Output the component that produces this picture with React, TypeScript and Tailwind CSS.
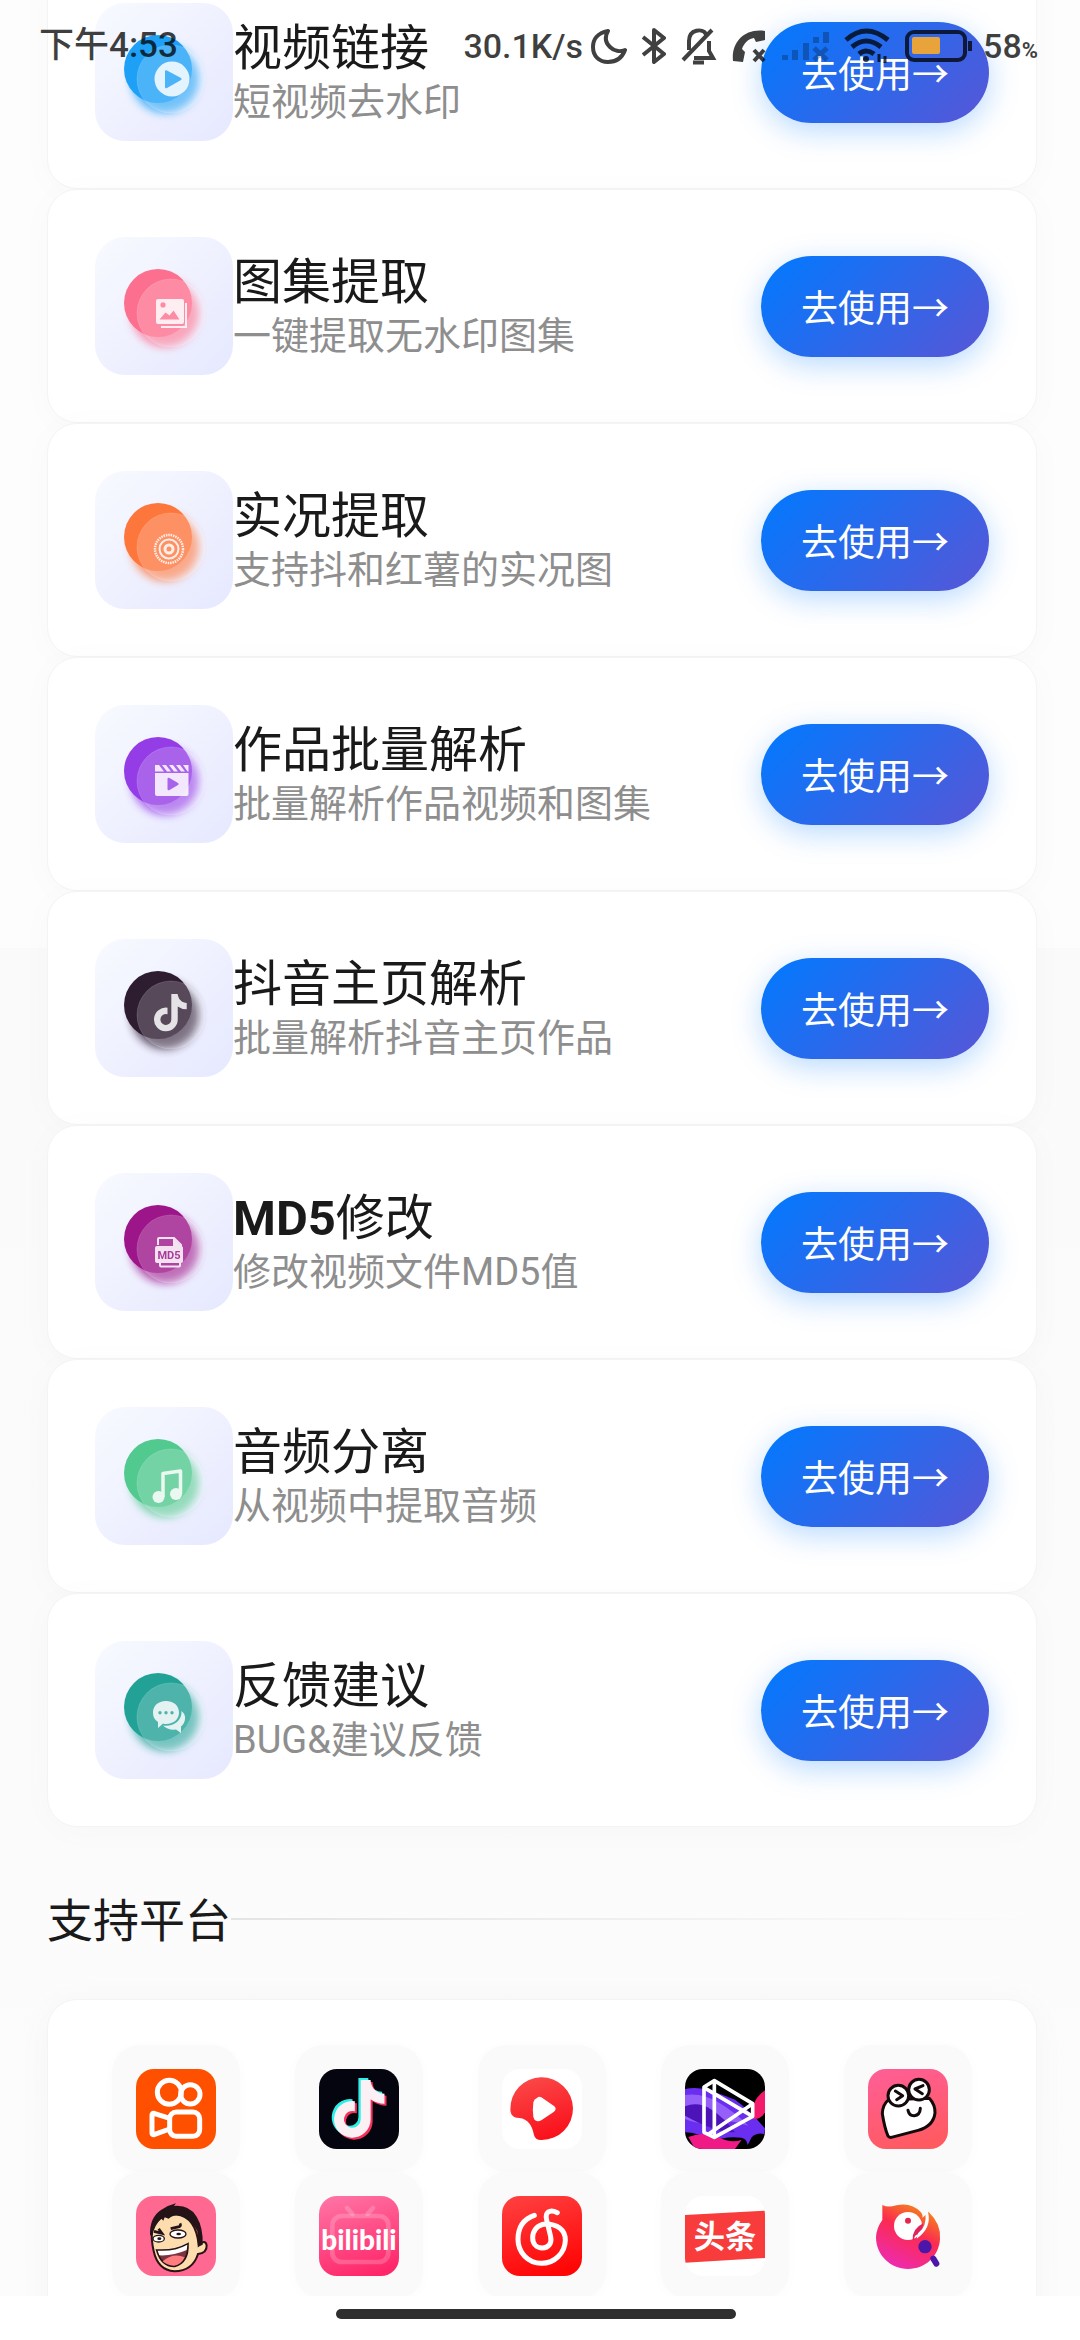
import React from "react"

interface Tool {
  title: string
  desc: string
  color: string
  glyph: React.ReactNode
}

const TIKTOK_PATH =
  "M448,209.91a210.06,210.06,0,0,1-122.77-39.25V349.38A162.55,162.55,0,1,1,185,188.31V278.2a74.62,74.62,0,1,0,52.23,71.18V0l88,0a121.18,121.18,0,0,0,1.86,22.17h0A122.18,122.18,0,0,0,381,102.39a121.43,121.43,0,0,0,67,20.14Z"

// 功能列表
const tools: Tool[] = [
  {
    title: "视频链接",
    desc: "短视频去水印",
    color: "#1ea0f6",
    glyph: (
      <path
        fillRule="evenodd"
        d="M77 58.5a17.5 17.5 0 1 0 0 35a17.5 17.5 0 0 0 0-35ZM70 68.5q0-2 2-1l14 7.500q1.500 1 0 2l-14 8q-2 1-2-1Z"
      />
    )
  },
  {
    title: "图集提取",
    desc: "一键提取无水印图集",
    color: "#fd6f8e",
    glyph: (
      <>
        <path
          fillRule="evenodd"
          d="M63 62h24q2 0 2 2v21q0 2-2 2H63q-2 0-2-2V64q0-2 2-2ZM68 65.300a2.600 2.600 0 1 0 0 5.200a2.600 2.600 0 0 0 0-5.200ZM64.500 82.500h20l-6-9-4 5-4-3Z"
        />
        <path d="M91 66v24H66" fill="none" stroke="#fff" strokeWidth="2" />
      </>
    )
  },
  {
    title: "实况提取",
    desc: "支持抖和红薯的实况图",
    color: "#fd763c",
    glyph: (
      <g fill="none" stroke="#fff">
        <circle cx="74" cy="78" r="4" strokeWidth="3" />
        <circle cx="74" cy="78" r="9.500" strokeWidth="2" />
        <circle cx="74" cy="78" r="14" strokeWidth="2.500" strokeDasharray="1.500 0.900" />
      </g>
    )
  },
  {
    title: "作品批量解析",
    desc: "批量解析作品视频和图集",
    color: "#943de6",
    glyph: (
      <>
        <path d="M60 60h4l5 6.500h-9ZM67 60h4l5 6.500h-4ZM74 60h4l5 6.500h-4ZM81 60h4l5 6.500h-4ZM88 60h5.500v6.500h-1Z" />
        <path
          fillRule="evenodd"
          d="M60 68h33.500v21q0 2-2 2H62q-2 0-2-2ZM72.500 74v10q0 2 2 1l8.500-5q1.500-1 0-2l-8.500-5q-2-1-2 1Z"
        />
      </>
    )
  },
  {
    title: "抖音主页解析",
    desc: "批量解析抖音主页作品",
    color: "#2e1c30",
    glyph: <path d={TIKTOK_PATH} transform="translate(59 55) scale(0.073)" />
  },
  {
    title: "MD5修改",
    desc: "修改视频文件MD5值",
    color: "#9c168a",
    glyph: (
      <>
        <path d="M63 72v-6q0-1 1-1h15l7 7v2M65 90v2.500q0 1 1 1h18q1 0 1-1V90" fill="none" stroke="#fff" strokeWidth="2" />
        <path d="M78 65l8 8h-8Z" />
        <rect x="60" y="73" width="28" height="17" rx="2" />
        <text
          x="74"
          y="85.500"
          textAnchor="middle"
          fill="#a83a9b"
          className="font-['Roboto',sans-serif] text-[11px] font-bold"
        >
          MD5
        </text>
      </>
    )
  },
  {
    title: "音频分离",
    desc: "从视频中提取音频",
    color: "#52c98e",
    glyph: (
      <>
        <path d="M68 90V66.500L85.500 64v23" fill="none" stroke="#fff" strokeWidth="3.500" strokeLinejoin="round" />
        <circle cx="63.500" cy="90" r="6" />
        <circle cx="81" cy="87" r="6" />
      </>
    )
  },
  {
    title: "反馈建议",
    desc: "BUG&建议反馈",
    color: "#22a296",
    glyph: (
      <>
        <path
          fillRule="evenodd"
          d="M71 60c8 0 13 5 13 11.500S79 83 71 83q-2 0-3-.5L63 87v-6q-5-3-5-9.500C58 65 63 60 71 60ZM65 70a1.700 1.700 0 1 0 0 3.400a1.700 1.700 0 0 0 0-3.400ZM71 70a1.700 1.700 0 1 0 0 3.400a1.700 1.700 0 0 0 0-3.400ZM77 70a1.700 1.700 0 1 0 0 3.400a1.700 1.700 0 0 0 0-3.400Z"
        />
        <path d="M86.500 70q4 3 3.500 8t-4 7.500V92l-5-3.500q-8 1-13-4 9 1 14-3.500t4.500-11Z" />
      </>
    )
  }
]

const ToolIcon: React.FC<{ id: string; color: string; children: React.ReactNode }> = ({ id, color, children }) => (
  <div className="size-[138px] shrink-0 rounded-[30px] bg-linear-135/srgb from-[#f8faff] to-[#e6e8ff]">
    <svg viewBox="0 0 138 138" className="size-full" aria-hidden="true">
      <defs>
        <filter id={id} x="-30%" y="-30%" width="160%" height="160%">
          <feGaussianBlur stdDeviation="4" />
        </filter>
      </defs>
      <circle cx="70" cy="76" r="34" fill={color} opacity="0.75" filter={`url(#${id})`} />
      <circle cx="63" cy="66" r="34" fill={color} />
      <circle cx="76" cy="76" r="34" fill="#fff" fillOpacity="0.2" stroke="#fff" strokeOpacity="0.15" />
      <g fill="#fff" opacity="0.85">
        {children}
      </g>
    </svg>
  </div>
)

// 标题中的英文和数字加粗
const Title: React.FC<{ text: string }> = ({ text }) => (
  <h2 className="text-[49px] leading-[56px] text-[#1a1a1a]">
    {text.split(/([A-Za-z0-9]+)/).map((part, i) =>
      i % 2 ? (
        <b key={i} className="font-bold">
          {part}
        </b>
      ) : (
        part
      )
    )}
  </h2>
)

const ToolCard: React.FC<{ tool: Tool; index: number }> = ({ tool, index }) => (
  <li className="flex items-center rounded-[30px] border border-[#f4f4f4] bg-white p-[47px] shadow-[0_4px_36px_rgba(0,0,0,0.025)]">
    <ToolIcon id={`glow-${index}`} color={tool.color}>
      {tool.glyph}
    </ToolIcon>
    <div className="min-w-0 flex-1 pt-1">
      <Title text={tool.title} />
      <p className="text-[38px] leading-[50px] text-[#8e8e8e]">{tool.desc}</p>
    </div>
    <button
      type="button"
      className="h-[101px] shrink-0 rounded-full bg-linear-135/srgb from-[#007aff] to-[#5856d6] px-10 pt-2 text-[37px] text-white shadow-[0_8px_30px_rgba(0,122,255,0.28)]"
    >
      去使用→
    </button>
  </li>
)

// 支持的平台图标
const platforms: { name: string; logo: React.ReactNode }[] = [
  {
    name: "快手",
    logo: (
      <>
        <rect width="240" height="240" fill="#ff5000" />
        <g fill="none" stroke="#fff" strokeWidth="15" strokeLinejoin="round">
          <circle cx="100" cy="70" r="36" />
          <circle cx="163" cy="76" r="29" />
          <rect x="101" y="129" width="90" height="73" rx="20" />
          <path d="M101 148L54 133q-6-1-6 5v54q0 6 6 5l47-17" />
        </g>
      </>
    )
  },
  {
    name: "抖音",
    logo: (
      <>
        <rect width="240" height="240" fill="#05050f" />
        <path d={TIKTOK_PATH} transform="translate(38 27) scale(0.338)" fill="#2ff0e8" />
        <path d={TIKTOK_PATH} transform="translate(51 39) scale(0.338)" fill="#f5315b" />
        <path d={TIKTOK_PATH} transform="translate(45 33) scale(0.338)" fill="#fbf0f4" />
      </>
    )
  },
  {
    name: "西瓜视频",
    logo: (
      <>
        <rect width="240" height="240" fill="#fff" />
        <path
          d="M25 122A94 94 0 1 1 119 213Q100 214 96 198C90 168 78 150 52 147C34 146 26 138 25 122Z"
          fill="url(#xigua)"
        />
        <path
          d="M106 86q4-5 12-1l38 26q10 8 0 17l-38 26q-8 4-14 2-8-2-10-12-3-22 0-44 2-10 12-14Z"
          fill="#fff"
        />
      </>
    )
  },
  {
    name: "微视",
    logo: (
      <>
        <rect width="240" height="240" fill="#000" />
        <path d="M0 60Q40 52 80 66T150 92Q190 120 240 178L238 195Q215 190 200 205L188 228Q186 210 170 206Q120 200 80 218Q40 190 0 190Z" fill="#6a2ef0" />
        <path d="M0 78Q50 70 100 100T190 170Q130 150 90 160T0 150Z" fill="#9560fa" />
        <path d="M0 112Q40 96 80 122T150 190Q90 190 0 140Z" fill="#4c14b8" />
        <path d="M240 64Q212 84 206 108L204 150Q228 152 240 130Z" fill="#f41a6b" />
        <path d="M10 204Q60 185 100 205T170 212L150 240H30Z" fill="#f01a86" />
        <g fill="none" stroke="#fff" strokeWidth="11" strokeLinejoin="round">
          <path d="M57 54L88 35L203 104V142L88 205L57 190Z" />
          <path d="M88 35V205M57 56L203 142M72 194L203 104" />
        </g>
      </>
    )
  },
  {
    name: "皮皮虾",
    logo: (
      <>
        <rect width="240" height="240" fill="url(#ppx)" />
        <g fill="#fff" stroke="#140a0c" strokeWidth="9" strokeLinejoin="round" strokeLinecap="round">
          <path d="M62 92Q44 106 43 134Q50 178 60 201Q63 206 70 205L150 184Q196 172 201 132Q202 108 184 88Z" />
          <circle cx="91" cy="80" r="31" />
          <circle cx="153" cy="62" r="31" />
          <path d="M82 66L104 80L86 92M165 50L141 60L163 74M120 124Q124 141 139 140Q156 138 157 118" fill="none" />
        </g>
      </>
    )
  },
  {
    name: "最右",
    logo: (
      <>
        <rect width="240" height="240" fill="#ff6890" />
        <path
          d="M48 105Q60 55 120 55Q180 62 188 148Q208 128 212 148Q213 172 186 174Q170 225 115 226Q65 222 53 165Q45 130 48 105Z"
          fill="#fddcae"
          stroke="#2a1215"
          strokeWidth="6"
        />
        <path
          d="M42 118Q40 65 75 42Q95 28 120 22L114 30Q160 26 182 62Q202 95 200 146L187 152L184 105Q172 82 150 66Q118 48 98 68L86 64L82 74L76 68Q54 88 50 118Z"
          fill="#241417"
        />
        <path d="M54 106L78 112L68 98M104 98L130 92Q136 90 132 82" fill="none" stroke="#241417" strokeWidth="8" />
        <g fill="#fff" stroke="#241417" strokeWidth="4">
          <ellipse cx="68" cy="128" rx="17" ry="10" />
          <ellipse cx="126" cy="114" rx="24" ry="12" />
        </g>
        <ellipse cx="70" cy="128" rx="6" ry="4" fill="#241417" />
        <ellipse cx="128" cy="114" rx="7" ry="4" fill="#241417" />
        <path d="M62 162Q115 166 156 143Q158 200 116 211Q76 212 62 162Z" fill="#7e3240" stroke="#241417" strokeWidth="5" />
        <path d="M65 164Q115 168 154 146L152 162Q112 180 70 178Z" fill="#fff" />
        <path d="M80 196Q112 168 146 184Q136 206 114 209Q92 208 80 196Z" fill="#ff7d7e" />
      </>
    )
  },
  {
    name: "哔哩哔哩",
    logo: (
      <>
        <rect width="240" height="240" fill="url(#bili)" />
        <g fill="none" stroke="#fff" strokeOpacity="0.2" strokeWidth="14" strokeLinecap="round">
          <rect x="40" y="60" width="168" height="138" rx="28" />
          <path d="M84 36L100 54M162 36L146 54" />
        </g>
        <text
          x="120"
          y="162"
          textAnchor="middle"
          fill="#fff"
          className="font-['Lato',sans-serif] text-[84px] font-black"
        >
          bilibili
        </text>
      </>
    )
  },
  {
    name: "网易云音乐",
    logo: (
      <>
        <rect width="240" height="240" fill="url(#netease)" />
        <path
          d="M97 58C62 70 48 98 48 130A71 71 0 0 0 190 132C190 100 165 84 130 84C105 86 92 105 92 125C92 145 105 156 121 156C140 156 150 142 146 122L134 72C128 50 142 38 166 50"
          fill="none"
          stroke="#fff"
          strokeWidth="15"
          strokeLinecap="round"
        />
      </>
    )
  },
  {
    name: "今日头条",
    logo: (
      <>
        <rect width="240" height="240" fill="#fff" />
        <path d="M0 57L240 44V186L0 200Z" fill="#f83c3b" />
        <text
          x="120"
          y="157"
          textAnchor="middle"
          fill="#fff"
          className="font-['Noto_Sans_CJK_SC',sans-serif] text-[94px] font-bold"
        >
          头条
        </text>
      </>
    )
  },
  {
    name: "唱吧",
    logo: (
      <>
        <path
          d="M43 27Q60 36 85 28Q130 18 158 48Q166 58 163 66L182 48Q220 84 216 130C212 182 172 219 120 219S24 178 24 124Q25 96 43 72Z"
          fill="url(#changba)"
        />
        <circle cx="120" cy="90" r="42" fill="#fff" />
        <path d="M134 132Q132 98 166 82Q160 100 168 112L146 116Q136 122 140 132Z" fill="#e0225f" />
        <path d="M180 48Q192 96 146 128L150 112Q178 90 172 50Z" fill="#fff" />
        <circle cx="120" cy="74" r="9" fill="#e5254f" />
        <circle cx="171" cy="152" r="20" fill="#4a17a8" />
        <path d="M196 188L205 203" stroke="#4a17a8" strokeWidth="18" strokeLinecap="round" />
      </>
    )
  }
]

const Gradient: React.FC<{ id: string; from: string; to: string }> = ({ id, from, to }) => (
  <linearGradient id={id} x1="0.3" y1="0" x2="0.6" y2="1">
    <stop offset="0" stopColor={from} />
    <stop offset="1" stopColor={to} />
  </linearGradient>
)

const StatusBar: React.FC = () => (
  <header className="absolute inset-x-0 top-0 flex h-[92px] items-center justify-between pr-[42px] pl-[39px] font-['Roboto','Noto_Sans_CJK_SC',sans-serif] text-[34px] font-medium text-black/75">
    <time className="text-[35px]">下午4:53</time>
    <div className="flex items-center gap-[15px]">
      <div className="flex items-center gap-2">
        <span>30.1K/s</span>
        {/* 勿扰 */}
        <svg viewBox="0 0 36 36" className="size-9" fill="none" stroke="currentColor" strokeWidth="4" strokeLinejoin="round">
          <path d="M17 3C6 5 2 12 2 19c0 9 6 15 15 15 8 0 14-4 17-12-5 2-11 1-15-3-5-5-5-11-2-16Z" />
        </svg>
      </div>
      {/* 蓝牙 */}
      <svg viewBox="0 0 24 38" className="h-[38px] w-6" fill="none" stroke="currentColor" strokeWidth="4" strokeLinejoin="round">
        <path d="M1 10L22 27L12 35V3L22 11L1 28" />
      </svg>
      {/* 静音 */}
      <svg viewBox="0 0 36 38" className="h-[38px] w-9" fill="none" stroke="currentColor" strokeWidth="4">
        <path d="M2 33L31 3M8 23V14C8 2 22 1 25 7M28 14V24L32 31H13M12 35.500H23" />
      </svg>
      {/* 通话 */}
      <svg viewBox="0 0 34 34" className="size-[34px]" fill="currentColor">
        <path d="M33 2V11L24 13L22 9C16 10 12 14 10 20L13 23L11 33L1 32C-1 14 12 -1 33 2Z" />
        <path d="M22 21L32 32M32 21L22 32" stroke="currentColor" strokeWidth="4" />
      </svg>
      {/* 信号 */}
      <svg viewBox="0 0 48 32" className="h-8 w-12 text-black/25" stroke="currentColor" strokeWidth="6">
        <path d="M4 30V25M14 30V20M25 30V13M35 13V7M45 13V2" />
        <path d="M33 18L46 30M46 18L33 30" strokeWidth="5" />
      </svg>
      {/* WiFi */}
      <svg viewBox="0 0 46 36" className="h-9 w-[46px]" fill="none" stroke="currentColor" strokeWidth="5">
        <path d="M2 12Q22 -6 44 12M8 19Q22 7 37 19M15 26Q22 20 30 26" />
        <circle cx="22" cy="31" r="3" fill="currentColor" stroke="none" />
        <path d="M35 26V34M41 28V35" strokeWidth="3" />
      </svg>
      <div className="flex items-center gap-[10px]">
        {/* 电量 */}
        <svg viewBox="0 0 68 32" className="h-8 w-[68px]">
          <rect x="2" y="2" width="58" height="28" rx="7" fill="none" stroke="currentColor" strokeWidth="4" />
          <rect x="7" y="7" width="28" height="17" rx="2" fill="#e8a33a" />
          <path d="M65 11V21" stroke="currentColor" strokeWidth="4" />
        </svg>
        <span>
          58<small className="text-[22px] font-bold">%</small>
        </span>
      </div>
    </div>
  </header>
)

const App: React.FC = () => {
  return (
    <div className="relative flex h-screen flex-col overflow-hidden bg-white font-['Roboto','Noto_Sans_CJK_SC',sans-serif]">
      <main className="min-h-0 flex-1 overflow-hidden bg-[linear-gradient(#fdfdfd_948px,#fafafa_948px,#fcfcfc)] pr-[43px] pl-[47px]">
        {/* 功能列表 */}
        <ul className="-mt-[45px]">
          {tools.map((tool, i) => (
            <ToolCard key={tool.title} tool={tool} index={i} />
          ))}
        </ul>

        {/* 支持平台 */}
        <section className="mt-[60px]">
          <div className="flex items-center">
            <h2 className="pt-1 text-[46px] leading-[60px] text-[#1a1a1a]">支持平台</h2>
            <div className="h-[2px] flex-1 bg-linear-to-r from-[#e4e4e4] to-transparent" />
          </div>
          <ul className="mt-12 grid grid-cols-5 rounded-[30px] border border-[#f4f4f4] bg-white px-9 py-[45px] shadow-[0_4px_36px_rgba(0,0,0,0.03)]">
            {platforms.map((p) => (
              <li key={p.name} className="flex justify-center">
                <div className="flex h-[127px] w-32 items-center justify-center rounded-[28px] bg-[#fafafa] shadow-[0_2px_14px_rgba(0,0,0,0.02)]">
                  <svg viewBox="0 0 240 240" className="size-20 rounded-[18px]" role="img" aria-label={p.name}>
                    <defs>
                      <Gradient id="xigua" from="#fb4848" to="#f90f1a" />
                      <Gradient id="ppx" from="#ff5e94" to="#ff5a60" />
                      <Gradient id="bili" from="#ff70a2" to="#ff276a" />
                      <Gradient id="netease" from="#ff3d3d" to="#ff0505" />
                      <linearGradient id="changba" x1="0.8" y1="0.1" x2="0.35" y2="1">
                        <stop offset="0" stopColor="#f5801e" />
                        <stop offset="0.4" stopColor="#fb2b50" />
                        <stop offset="1" stopColor="#ee2bb0" />
                      </linearGradient>
                    </defs>
                    {p.logo}
                  </svg>
                </div>
              </li>
            ))}
          </ul>
        </section>
      </main>

      <StatusBar />

      {/* 底部手势条 */}
      <footer className="flex h-11 shrink-0 items-center justify-center bg-white pr-2 pb-2">
        <div className="h-[10px] w-[400px] rounded-full bg-[#2f2f2f]" />
      </footer>
    </div>
  )
}

export default App
